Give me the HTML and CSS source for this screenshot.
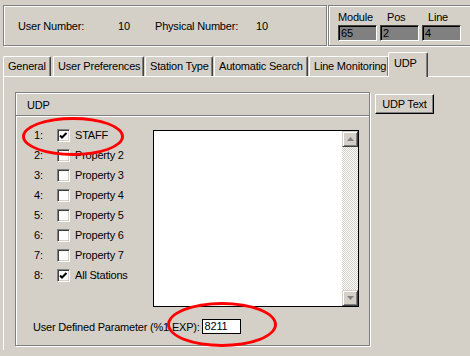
FILE: index.html
```html
<!DOCTYPE html>
<html lang="en">
<head>
    <meta charset="UTF-8">
    <title>Station Properties - UDP</title>
    <link rel="stylesheet" href="styles.css">
</head>
<body>

    <!-- Station info -->
    <div class="header">
        <div class="info">
            <span class="info-user">User Number:</span>
            <span class="info-val">10</span>
            <span class="info-phys">Physical Number:</span>
            <span>10</span>
        </div>
        <div class="pos">
            <div class="field">
                <span class="field-label">Module</span>
                <div class="gray-box">65</div>
            </div>
            <div class="field">
                <span class="field-label pos-label">Pos</span>
                <div class="gray-box">2</div>
            </div>
            <div class="field">
                <span class="field-label line-label">Line</span>
                <div class="gray-box">4</div>
            </div>
        </div>
    </div>

    <!-- Tabs -->
    <div class="tabs">
        <div class="tab tab-general">General</div>
        <div class="tab tab-prefs">User Preferences</div>
        <div class="tab tab-type">Station Type</div>
        <div class="tab tab-search">Automatic Search</div>
        <div class="tab tab-line">Line Monitoring</div>
        <div class="tab tab-udp active">UDP</div>
    </div>

    <div class="panel">
        <div class="group">
            <div class="group-title">UDP</div>
            <div class="group-body">
                <div class="props">
                    <div class="prop"><span class="num">1:</span><span class="check"><svg width="11" height="11" viewBox="0 0 11 11"><path d="M2 4.5 L4 6.5 L8.5 2" fill="none" stroke="#000" stroke-width="2"/></svg></span><span class="prop-label">STAFF</span></div>
                    <div class="prop"><span class="num">2:</span><span class="check"></span><span class="prop-label">Property 2</span></div>
                    <div class="prop"><span class="num">3:</span><span class="check"></span><span class="prop-label">Property 3</span></div>
                    <div class="prop"><span class="num">4:</span><span class="check"></span><span class="prop-label">Property 4</span></div>
                    <div class="prop"><span class="num">5:</span><span class="check"></span><span class="prop-label">Property 5</span></div>
                    <div class="prop"><span class="num">6:</span><span class="check"></span><span class="prop-label">Property 6</span></div>
                    <div class="prop"><span class="num">7:</span><span class="check"></span><span class="prop-label">Property 7</span></div>
                    <div class="prop"><span class="num">8:</span><span class="check"><svg width="11" height="11" viewBox="0 0 11 11"><path d="M2 4.5 L4 6.5 L8.5 2" fill="none" stroke="#000" stroke-width="2"/></svg></span><span class="prop-label">All Stations</span></div>
                </div>
                <div class="listbox">
                    <div class="list-area"></div>
                    <div class="scrollbar">
                        <div class="arrow"><svg width="7" height="4" viewBox="0 0 7 4"><path d="M3.5 0 L7 4 L0 4 Z" fill="#808080"/></svg></div>
                        <div class="track"></div>
                        <div class="arrow"><svg width="7" height="4" viewBox="0 0 7 4"><path d="M0 0 L7 0 L3.5 4 Z" fill="#808080"/></svg></div>
                    </div>
                </div>
            </div>
            <div class="param">
                <span>User Defined Parameter (%1 EXP):</span>
                <span class="param-input">8211</span>
            </div>
        </div>
        <button class="udp-text">UDP Text</button>
    </div>

    <!-- Red highlight marks -->
    <div class="mark mark-staff"></div>
    <div class="mark mark-param"></div>

</body>
</html>
```

FILE: styles.css
```css
body {
    margin: 0;
    padding-top: 5px;
    font-family: "Liberation Sans", Arial, sans-serif;
    font-size: 11px;
    letter-spacing: -0.2px;
    color: #000;
    background-color: #d4d0c8;
    width: 470px;
    height: 356px;
    overflow: hidden;
    position: relative;
    box-sizing: border-box;
}

/* Header boxes */
.header {
    display: flex;
    height: 42px;
    margin-left: 3px;
}

.info {
    width: 324px;
    height: 41px;
    box-sizing: border-box;
    border: 1px solid #808080;
    box-shadow: inset 1px 1px 0 #fff, 1px 1px 0 #fff;
    display: flex;
    align-items: center;
    padding-left: 14px;
}

.info-user {
    width: 100px;
}

.info-val {
    width: 37px;
}

.info-phys {
    width: 101px;
}

.pos {
    flex: 1;
    height: 41px;
    box-sizing: border-box;
    border: 1px solid #808080;
    border-right: none;
    margin-left: 1px;
    box-shadow: inset 1px 1px 0 #fff, 0 1px 0 #fff;
    display: flex;
    gap: 3px;
    padding: 4px 0 0 9px;
}

.field {
    display: flex;
    flex-direction: column;
    width: 39px;
}

.field-label {
    height: 15px;
    line-height: 15px;
}

.pos-label {
    padding-left: 7px;
}

.line-label {
    padding-left: 6px;
}

.gray-box {
    height: 16px;
    box-sizing: border-box;
    background-color: #808080;
    border: 1px solid #404040;
    border-right-color: #fff;
    border-bottom-color: #fff;
    box-shadow: inset 1px 1px 0 #000;
    padding-left: 2px;
    line-height: 14px;
}

/* Tabs */
.tabs {
    display: flex;
    align-items: flex-end;
    height: 24px;
    margin-top: 5px;
    margin-left: 3px;
}

.tab {
    height: 20px;
    box-sizing: border-box;
    border-top: 1px solid #fff;
    border-left: 1px solid #fff;
    border-right: 1px solid #404040;
    box-shadow: inset -1px 0 0 #808080;
    border-radius: 2px 2px 0 0;
    padding-left: 4px;
    line-height: 18px;
    white-space: nowrap;
    overflow: hidden;
}

.tab-general { width: 48px; margin-right: 2px; }
.tab-prefs { width: 91px; margin-right: 1px; }
.tab-type { width: 68px; margin-right: 1px; }
.tab-search { width: 94px; margin-right: 1px; }
.tab-line { width: 80px; }

.tab.active {
    width: 40px;
    height: 25px;
    margin-left: -1px;
    margin-bottom: -1px;
    position: relative;
    z-index: 1;
    background-color: #d4d0c8;
    padding-left: 5px;
    line-height: 20px;
}

/* Tab panel */
.panel {
    display: flex;
    align-items: flex-start;
    margin-left: 3px;
    border-top: 1px solid #fff;
    border-left: 1px solid #fff;
    padding: 15px 0 0 11px;
    height: 258px;
}

.group {
    width: 355px;
    height: 254px;
    box-sizing: border-box;
    border: 1px solid #808080;
    box-shadow: inset 1px 1px 0 #fff, 1px 1px 0 #fff;
    display: flex;
    flex-direction: column;
}

.group-title {
    height: 22px;
    line-height: 24px;
    padding-left: 11px;
    border-bottom: 1px solid #808080;
    box-shadow: 0 1px 0 #fff;
}

.group-body {
    display: flex;
    align-items: flex-start;
    padding-top: 9px;
}

.props {
    width: 119px;
    margin-left: 18px;
}

.prop {
    display: flex;
    align-items: center;
    height: 20px;
}

.num {
    width: 23px;
}

.check {
    width: 13px;
    height: 13px;
    box-sizing: border-box;
    background-color: #fff;
    border: 1px solid #808080;
    border-right-color: #fff;
    border-bottom-color: #fff;
    box-shadow: inset 1px 1px 0 #404040, inset -1px -1px 0 #d4d0c8;
    display: flex;
}

.check svg {
    margin-top: 1px;
}

.prop-label {
    margin-left: 5px;
}

/* List box */
.listbox {
    display: flex;
    width: 206px;
    height: 177px;
    margin-top: 5px;
    box-sizing: border-box;
    border: 1px solid #000;
    background-color: #fff;
}

.list-area {
    flex: 1;
}

.scrollbar {
    width: 16px;
    display: flex;
    flex-direction: column;
}

.arrow {
    width: 16px;
    height: 16px;
    box-sizing: border-box;
    background-color: #d4d0c8;
    border: 1px solid #d4d0c8;
    border-right-color: #404040;
    border-bottom-color: #404040;
    box-shadow: inset 1px 1px 0 #fff, inset -1px -1px 0 #808080;
    display: flex;
    align-items: center;
    justify-content: center;
}

.track {
    flex: 1;
    background-color: #fff;
    background-image: repeating-conic-gradient(#d4d0c8 0 25%, #fff 0 50%);
    background-size: 2px 2px;
}

/* Parameter row */
.param {
    display: flex;
    align-items: center;
    margin-top: 12px;
    margin-left: 17px;
    height: 15px;
}

.param-input {
    width: 39px;
    height: 15px;
    box-sizing: border-box;
    border: 1px solid #000;
    background-color: #fff;
    margin-left: 2px;
    padding-left: 2px;
    line-height: 13px;
}

.udp-text {
    width: 59px;
    height: 20px;
    margin: 2px 0 0 5px;
    padding: 0;
    font-family: "Liberation Sans", Arial, sans-serif;
    font-size: 11px;
    letter-spacing: -0.2px;
    color: #000;
    background-color: #d4d0c8;
    border: 1px solid #fff;
    border-right-color: #000;
    border-bottom-color: #000;
    box-shadow: inset -1px -1px 0 #808080;
}

/* Red markers drawn over the dialog */
.mark {
    position: absolute;
    border: 3px solid #f00;
    border-radius: 50%;
    box-sizing: border-box;
}

.mark-staff {
    left: 22px;
    top: 117px;
    width: 102px;
    height: 39px;
}

.mark-param {
    left: 167px;
    top: 302px;
    width: 110px;
    height: 45px;
}
```
